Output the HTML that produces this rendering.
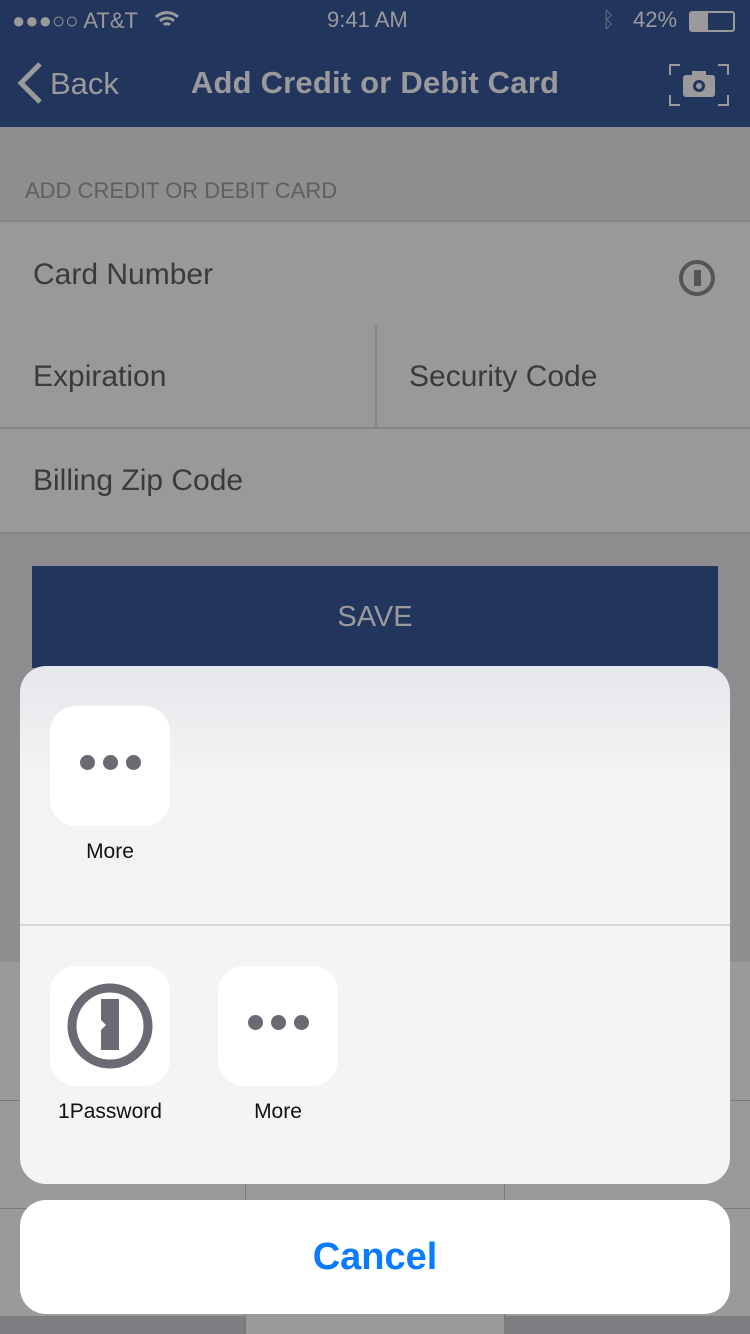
<!DOCTYPE html>
<html><head><meta charset="utf-8"><style>
body{margin:0;width:750px;height:1334px;overflow:hidden;background:#8e8e90;font-family:"Liberation Sans",sans-serif;position:relative}
.abs{position:absolute}
.nav{left:0;top:0;width:750px;height:127px;background:#22355d;color:#9a9a9c}
.row{left:0;width:750px;background:#999999;border-bottom:2px solid #858585;color:#3a3a3a;font-size:30px}
.sheet{left:20px;top:666px;width:710px;height:518px;border-radius:26px;background:linear-gradient(#e6e7ec,#f3f3f3 20%,#f4f4f4);overflow:hidden}
.icon{width:120px;height:120px;background:#fff;border-radius:26px}
.lbl{font-size:21px;color:#111;text-align:center;width:160px}
.dot{width:15px;height:15px;border-radius:50%;background:#6a6a72;display:inline-block;margin:0 4px}
</style></head><body>
<div class="abs nav">
 <div class="abs" style="left:12px;top:8px;font-size:22px">●●●○○ AT&amp;T</div>
 <svg class="abs" style="left:154px;top:10px" width="26" height="20" viewBox="0 0 26 20"><path d="M2 7a16 16 0 0 1 22 0M6 11a10 10 0 0 1 14 0M10 15a4 4 0 0 1 6 0" stroke="#9a9a9c" stroke-width="3" fill="none"/></svg>
 <div class="abs" style="left:327px;top:7px;font-size:22px">9:41 AM</div>
 <div class="abs" style="left:602px;top:7px;font-size:22px;color:#6b7080">ᛒ</div>
 <div class="abs" style="left:633px;top:7px;font-size:22px">42%</div>
 <div class="abs" style="left:689px;top:11px;width:42px;height:17px;border:2px solid #9a9a9c;border-radius:3px"><div style="width:17px;height:17px;background:#9a9a9c"></div></div>
 <svg class="abs" style="left:16px;top:62px" width="28" height="42"><path d="M24 2L5 21l19 19" stroke="#9a9a9c" stroke-width="5" fill="none"/></svg>
 <div class="abs" style="left:50px;top:66px;font-size:31px">Back</div>
 <div class="abs" style="left:0;width:750px;text-align:center;top:65px;font-size:31px;font-weight:bold;letter-spacing:0.2px">Add Credit or Debit Card</div>
 <svg class="abs" style="left:668px;top:63px" width="62" height="44"><path d="M2 12V2h10M50 2h10v10M2 32v10h10M50 42h10V32" stroke="#9a9a9c" stroke-width="2" fill="none"/><rect x="15" y="12" width="32" height="22" rx="3" fill="#9a9a9c"/><rect x="24" y="8" width="14" height="6" fill="#9a9a9c"/><circle cx="31" cy="23" r="6" fill="#22355d"/><circle cx="31" cy="23" r="3" fill="#9a9a9c"/></svg>
</div>
<div class="abs" style="left:25px;top:178px;font-size:22px;color:#5f5f5f">ADD CREDIT OR DEBIT CARD</div>
<div class="abs row" style="top:220px;height:103px;border-top:2px solid #858585"><span class="abs" style="left:33px;top:36px">Card Number</span>
<div class="abs" style="left:679px;top:38px;width:36px;height:36px;border:4px solid #555;border-radius:50%;box-sizing:border-box"><div style="width:7px;height:16px;background:#555;margin:6px auto"></div></div></div>
<div class="abs row" style="top:325px;height:102px"><span class="abs" style="left:33px;top:35px">Expiration</span><div class="abs" style="left:375px;top:0;width:2px;height:102px;background:#858585"></div><span class="abs" style="left:409px;top:35px">Security Code</span></div>
<div class="abs row" style="top:429px;height:103px"><span class="abs" style="left:33px;top:35px">Billing Zip Code</span></div>
<div class="abs" style="left:32px;top:566px;width:686px;height:102px;background:#22355d;color:#9a9a9c;font-size:29px;text-align:center;line-height:102px">SAVE</div>
<div class="abs" style="left:0;top:962px;width:750px;height:372px;background:#9a9a9a"></div>
<div class="abs" style="left:0;top:1100px;width:750px;height:1px;background:#7a7a7a"></div>
<div class="abs" style="left:0;top:1208px;width:750px;height:1px;background:#7a7a7a"></div>
<div class="abs" style="left:245px;top:962px;width:1px;height:372px;background:#7a7a7a"></div>
<div class="abs" style="left:504px;top:962px;width:1px;height:372px;background:#7a7a7a"></div>
<div class="abs" style="left:0;top:1316px;width:245px;height:18px;background:#7e7e82"></div>
<div class="abs" style="left:505px;top:1316px;width:245px;height:18px;background:#7e7e82"></div>
<div class="abs sheet">
 <div class="abs icon" style="left:30px;top:40px;text-align:center;line-height:120px"><span class="dot"></span><span class="dot"></span><span class="dot"></span></div>
 <div class="abs lbl" style="left:10px;top:174px">More</div>
 <div class="abs" style="left:0;top:258px;width:710px;height:2px;background:#d6d6d8"></div>
 <div class="abs icon" style="left:30px;top:300px"><svg width="120" height="120"><circle cx="60" cy="60" r="38" stroke="#6a6a72" stroke-width="9" fill="none"/><path d="M51 33h18v51H51V64l5-5-5-5z" fill="#6a6a72"/></svg></div>
 <div class="abs lbl" style="left:10px;top:434px">1Password</div>
 <div class="abs icon" style="left:198px;top:300px;text-align:center;line-height:120px"><span class="dot"></span><span class="dot"></span><span class="dot"></span></div>
 <div class="abs lbl" style="left:178px;top:434px">More</div>
</div>
<div class="abs" style="left:20px;top:1200px;width:710px;height:114px;background:#fff;border-radius:26px;text-align:center;line-height:114px;color:#0a7aff;font-size:38px;font-weight:bold">Cancel</div>
</body></html>
